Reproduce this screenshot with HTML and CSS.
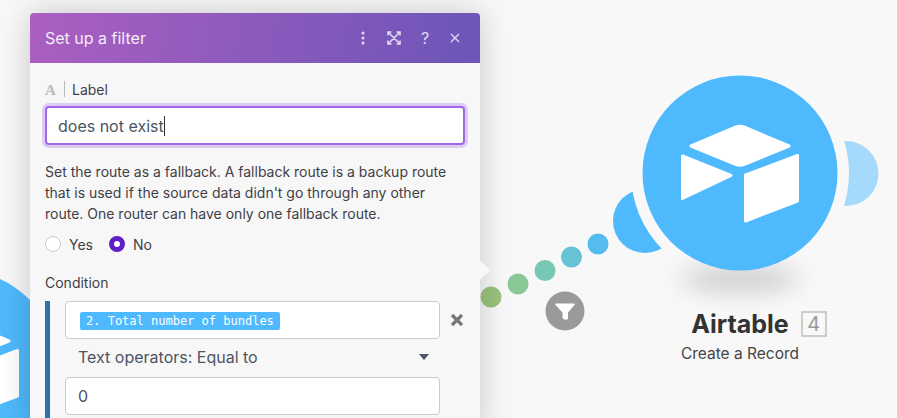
FILE: index.html
```html
<!DOCTYPE html>
<html lang="en">
<head>
  <meta charset="UTF-8">
  <title>Set up a filter</title>
  <link rel="stylesheet" href="styles.css">
</head>
<body>

  <svg class="canvas" width="897" height="418" viewBox="0 0 897 418">
    <defs>
      <g id="airtableIcon" fill="#fff" stroke="#fff" stroke-width="3" stroke-linejoin="round">
        <path d="M-49 -27 L-4 -46 Q0 -47.500 4 -46 L49 -27 L4 -8.500 Q0 -7.200 -4 -8.500 Z"/>
        <path d="M-57.500 -17 L-9 2.300 L-57.500 25.500 Z"/>
        <path d="M5.500 2 L57.500 -17.500 L57.500 28 L5.500 48 Z"/>
      </g>
      <filter id="blur" x="-50%" y="-150%" width="200%" height="400%">
        <feGaussianBlur stdDeviation="12"/>
      </filter>
    </defs>

    <!-- left node -->
    <circle cx="-40" cy="368" r="97.500" fill="#4fb9fd"/>
    <use href="#airtableIcon" transform="translate(-40 368)"/>

    <!-- route dots -->
    <circle cx="491" cy="297" r="10.500" fill="#9ac27c"/>
    <circle cx="518" cy="284" r="10.500" fill="#89c797"/>
    <circle cx="545" cy="270.500" r="10.500" fill="#79c7b5"/>
    <circle cx="571.500" cy="257" r="10.500" fill="#67c2d6"/>
    <circle cx="598" cy="244" r="10.500" fill="#55bcf0"/>

    <!-- filter badge -->
    <circle cx="565" cy="311" r="19.500" fill="#9a9a9a"/>
    <path d="M556 303.500 H574 Q575.500 303.500 574.500 305 L568 312.500 V319 Q565 321 562.500 318 V312.500 L555.500 305 Q554.500 303.500 556 303.500 Z" fill="#fff"/>

    <!-- airtable node -->
    <circle cx="645" cy="221" r="32" fill="#4fb9fd"/>
    <circle cx="846" cy="173.500" r="32.500" fill="#a6dafc"/>
    <circle cx="740" cy="173" r="109" fill="#f8f8f8"/>
    <ellipse cx="740" cy="279" rx="60" ry="13" fill="#000" opacity="0.17" filter="url(#blur)"/>
    <circle cx="740" cy="173" r="97.500" fill="#4fb9fd"/>
    <use href="#airtableIcon" transform="translate(740 173)"/>
  </svg>

  <div class="node-label">
    <div class="node-title">
      <span class="node-name">Airtable</span>
      <span class="node-id">4</span>
    </div>
    <div class="node-action">Create a Record</div>
  </div>

  <div class="panel">
    <div class="panel-header">
      <span class="panel-title">Set up a filter</span>
      <div class="panel-tools">
        <svg class="tool tool-dots" width="4" height="14" viewBox="0 0 4 14" fill="#e3d8f2">
          <circle cx="2" cy="2" r="1.500"/>
          <circle cx="2" cy="7" r="1.500"/>
          <circle cx="2" cy="12" r="1.500"/>
        </svg>
        <svg class="tool tool-expand" width="14" height="14" viewBox="0 0 14 14" fill="none" stroke="#e3d8f2" stroke-width="1.600">
          <path d="M1 4.500 V1 H4.500 M9.500 1 H13 V4.500 M13 9.500 V13 H9.500 M4.500 13 H1 V9.500 M1.500 1.500 L12.500 12.500 M12.500 1.500 L1.500 12.500"/>
        </svg>
        <span class="tool tool-help">?</span>
        <svg class="tool tool-close" width="10" height="10" viewBox="0 0 10 10" fill="none" stroke="#e3d8f2" stroke-width="1.300">
          <path d="M1 1 L9 9 M9 1 L1 9"/>
        </svg>
      </div>
    </div>

    <div class="panel-body">
      <div class="field-label">
        <span class="type-icon">A</span>
        <span class="label-text">Label</span>
      </div>
      <div class="input input-focus">does not exist<span class="caret"></span></div>

      <p class="help">Set the route as a fallback. A fallback route is a backup route that is used if the source data didn't go through any other route. One router can have only one fallback route.</p>

      <div class="radios">
        <span class="radio"></span><span class="radio-text">Yes</span>
        <span class="radio radio-on"></span><span class="radio-text">No</span>
      </div>

      <div class="condition-title">Condition</div>
      <div class="condition">
        <div class="condition-row">
          <div class="input input-small"><span class="tag">2. Total number of bundles</span></div>
          <svg class="remove" width="14" height="14" viewBox="0 0 14 14" fill="none" stroke="#777" stroke-width="3.200">
            <path d="M2 2 L12 12 M12 2 L2 12"/>
          </svg>
        </div>
        <div class="operator">
          <span>Text operators: Equal to</span>
          <span class="arrow"></span>
        </div>
        <div class="input input-small input-value">0</div>
      </div>
    </div>
    <span class="panel-pointer"></span>
  </div>

</body>
</html>
```
FILE: styles.css
```css
* {
  box-sizing: border-box;
}

body {
  margin: 0;
  width: 897px;
  height: 418px;
  overflow: hidden;
  position: relative;
  background: #f8f8f8;
  font-family: Inter, "Liberation Sans", sans-serif;
  color: #3f3f46;
}

.canvas {
  position: absolute;
  left: 0;
  top: 0;
}

.node-label {
  position: absolute;
  left: 640px;
  top: 309px;
  width: 200px;
  text-align: center;
}

.node-title {
  display: flex;
  align-items: center;
  justify-content: center;
  gap: 12px;
  padding-left: 38px;
}

.node-name {
  font-size: 25px;
  font-weight: 700;
  line-height: 30px;
  color: #333;
}

.node-id {
  flex: none;
  width: 26px;
  height: 26px;
  border: 2px solid #ccc;
  font-size: 20px;
  line-height: 22px;
  color: #999;
}

.node-action {
  margin-top: 5px;
  font-size: 15.500px;
  line-height: 20px;
  color: #444;
}

.panel {
  position: absolute;
  left: 30px;
  top: 13px;
  width: 450px;
  height: 420px;
  background: #f7f7f7;
  border-radius: 4px 4px 0 0;
  box-shadow: 0 0 32px rgba(0, 0, 0, 0.2);
}

.panel-pointer {
  position: absolute;
  left: 450px;
  top: 247px;
  border-left: 10px solid #f7f7f7;
  border-top: 10px solid transparent;
  border-bottom: 10px solid transparent;
}

.panel-header {
  height: 50px;
  padding: 0 20px 0 15px;
  display: flex;
  align-items: center;
  justify-content: space-between;
  border-radius: 4px 4px 0 0;
  background: linear-gradient(100deg, #ab5fc1, #6c55b8);
}

.panel-title {
  font-size: 16px;
  color: #f3ecf8;
}

.panel-tools {
  display: flex;
  align-items: center;
}

.tool-dots {
  margin-right: 2px;
}

.tool-expand {
  margin-left: 20px;
  margin-right: 2px;
}

.tool-help {
  margin-left: 18px;
  width: 10px;
  font-size: 16px;
  line-height: 20px;
  color: #e3d8f2;
}

.tool-close {
  margin-left: 19px;
}

.panel-body {
  padding: 17px 15px 0;
}

.field-label {
  display: flex;
  align-items: center;
  height: 18px;
}

.type-icon {
  width: 20px;
  height: 16px;
  margin-right: 7px;
  border-right: 1px solid #bbb;
  font-family: "Liberation Serif", serif;
  font-weight: 700;
  font-size: 15px;
  line-height: 18px;
  color: #bbb;
}

.label-text {
  font-size: 14px;
}

.input {
  display: flex;
  align-items: center;
  background: #fff;
  border: 1px solid #ccc;
  border-radius: 4px;
  font-size: 16px;
  color: #4b5563;
}

.input-focus {
  width: 420px;
  height: 39px;
  margin-top: 8px;
  padding-left: 11px;
  border: 2px solid #a266ea;
  box-shadow: 0 0 0 3px rgba(162, 102, 234, 0.3);
}

.caret {
  width: 1px;
  height: 20px;
  background: #333;
}

.help {
  margin: 16px 0 0;
  font-size: 14px;
  line-height: 21px;
  color: #3f3f46;
}

.radios {
  display: flex;
  align-items: center;
  height: 20px;
  margin-top: 10px;
  font-size: 14px;
}

.radio {
  width: 16px;
  height: 16px;
  border-radius: 50%;
  background: #fff;
  border: 1px solid #ccc;
}

.radio-on {
  border: 5px solid #5e1fc7;
}

.radio-text {
  margin-left: 8px;
  margin-right: 16px;
}

.condition-title {
  margin-top: 19px;
  font-size: 14px;
  line-height: 20px;
}

.condition {
  margin-top: 8px;
  padding-left: 15px;
  border-left: 5px solid #2a6fae;
  height: 120px;
}

.condition-row {
  display: flex;
  align-items: center;
}

.input-small {
  width: 375px;
  height: 38px;
  padding-left: 14px;
}

.tag {
  width: 200px;
  height: 18px;
  margin-top: 2px;
  padding-left: 6px;
  border-radius: 2px;
  background: #4fb9fd;
  font-family: "DejaVu Sans Mono", "Liberation Mono", monospace;
  font-size: 12px;
  line-height: 18px;
  color: #fff;
}

.remove {
  margin-left: 10px;
}

.operator {
  width: 375px;
  height: 36px;
  margin-bottom: 2px;
  padding: 0 11px 0 13px;
  display: flex;
  align-items: center;
  justify-content: space-between;
  font-size: 16px;
  color: #4b5563;
}

.arrow {
  border-top: 6px solid #4b5563;
  border-left: 5px solid transparent;
  border-right: 5px solid transparent;
}

.input-value {
  padding-left: 12px;
}
```
